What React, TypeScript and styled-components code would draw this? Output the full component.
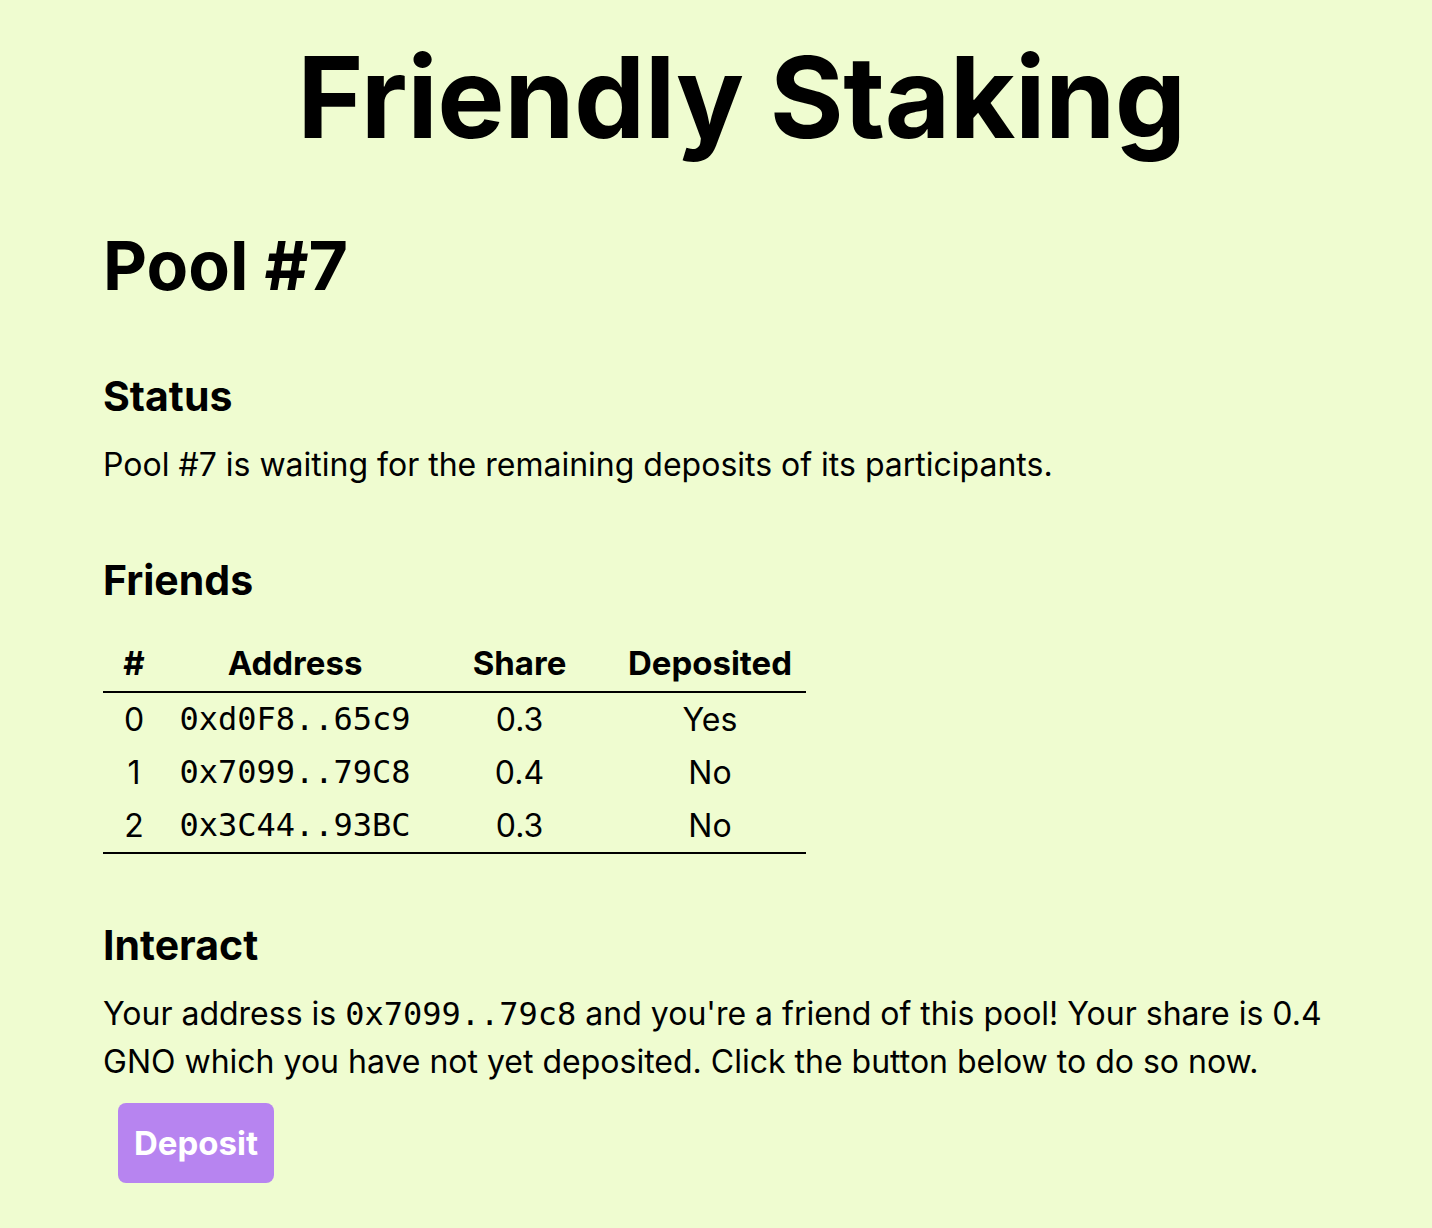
import styled, { createGlobalStyle } from "styled-components";

const GlobalStyle = createGlobalStyle`
  html, body {
    margin: 0;
    padding: 0;
    background: #effcd0;
  }
  body {
    font-family: Inter, "Noto Sans", sans-serif;
    color: #000;
  }
`;

const Page = styled.main`
  box-sizing: border-box;
  min-height: 1228px;
  padding: 27px 52px 40px 103px;
`;

const Title = styled.h1`
  margin: 0;
  text-align: center;
  font-size: 113px;
  font-weight: 700;
  line-height: 140px;
  letter-spacing: -0.5px;
`;

const PoolTitle = styled.h2`
  margin: 58px 0 0;
  font-size: 68px;
  font-weight: 700;
  line-height: 80px;
`;

const SectionTitle = styled.h3`
  margin: 66px 0 0;
  font-size: 41px;
  font-weight: 700;
  line-height: 50px;
`;

const Text = styled.p`
  margin: 20px 0 0;
  font-size: 32px;
  line-height: 48px;
`;

const Mono = styled.code`
  font-family: "DejaVu Sans Mono", "Liberation Mono", monospace;
  font-size: 32px;
`;

const Table = styled.table`
  margin-top: 30px;
  border-collapse: collapse;
  table-layout: fixed;
  width: 703px;
  font-size: 32px;
  border-bottom: 2px solid #000;
`;

const Col = styled.col<{ $w: number }>`
  width: ${(p) => p.$w}px;
`;

const HeadCell = styled.th`
  font-size: 33px;
  font-weight: 700;
  line-height: 56px;
  padding: 0;
  border-bottom: 2px solid #000;
  text-align: center;
`;

const Cell = styled.td<{ $mono?: boolean }>`
  text-align: center;
  padding: 0;
  line-height: 53px;
  font-family: ${(p) =>
    p.$mono ? `"DejaVu Sans Mono", "Liberation Mono", monospace` : "inherit"};
`;

const DepositButton = styled.button`
  display: block;
  margin: 17px 0 0 15px;
  width: 156px;
  height: 80px;
  border: none;
  border-radius: 8px;
  background: #b784f0;
  color: #fff;
  font-family: Inter, "Noto Sans", sans-serif;
  font-size: 33px;
  font-weight: 700;
  cursor: pointer;
`;

const friends = [
  { address: "0xd0F8..65c9", share: "0.3", deposited: "Yes" },
  { address: "0x7099..79C8", share: "0.4", deposited: "No" },
  { address: "0x3C44..93BC", share: "0.3", deposited: "No" },
];

const App = () => {
  return (
    <>
      <GlobalStyle />
      <Page>
        <Title>Friendly Staking</Title>
        <PoolTitle>Pool #7</PoolTitle>

        <SectionTitle>Status</SectionTitle>
        <Text>Pool #7 is waiting for the remaining deposits of its participants.</Text>

        <SectionTitle>Friends</SectionTitle>
        <Table>
          <colgroup>
            <Col $w={62} />
            <Col $w={260} />
            <Col $w={189} />
            <Col $w={192} />
          </colgroup>
          <thead>
            <tr>
              <HeadCell>#</HeadCell>
              <HeadCell>Address</HeadCell>
              <HeadCell>Share</HeadCell>
              <HeadCell>Deposited</HeadCell>
            </tr>
          </thead>
          <tbody>
            {friends.map((f, i) => (
              <tr key={f.address}>
                <Cell>{i}</Cell>
                <Cell $mono>{f.address}</Cell>
                <Cell>{f.share}</Cell>
                <Cell>{f.deposited}</Cell>
              </tr>
            ))}
          </tbody>
        </Table>

        <SectionTitle>Interact</SectionTitle>
        <Text>
          Your address is <Mono>0x7099..79c8</Mono> and you're a friend of this pool! Your share
          is 0.4 GNO which you have not yet deposited. Click the button below to do so now.
        </Text>
        <DepositButton>Deposit</DepositButton>
      </Page>
    </>
  );
};

export default App;
